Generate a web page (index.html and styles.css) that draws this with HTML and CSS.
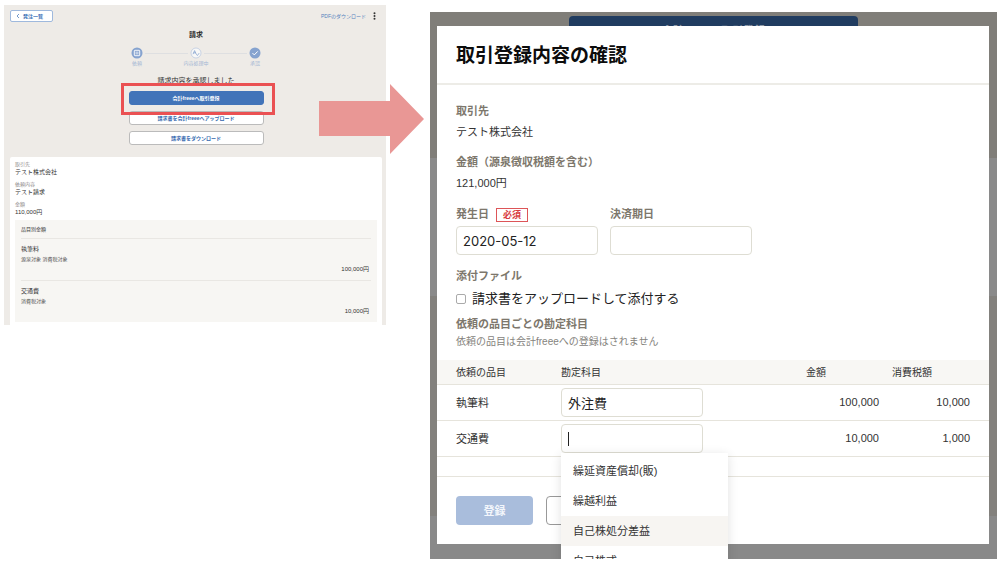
FILE: index.html
```html
<!DOCTYPE html>
<html lang="ja">
<head>
<meta charset="utf-8">
<title>取引登録内容の確認</title>
<link rel="stylesheet" href="styles.css">
</head>
<body>
<main class="stage">
  <section class="invoice">
    <div class="topbar">
      <button class="back" type="button">
        <svg class="chevron" viewBox="0 0 4 6"><path d="M3 1 1 3l2 2" fill="none" stroke="currentColor" stroke-width=".7"/></svg>
        <span>発注一覧</span>
      </button>
      <div class="tools">
        <a class="pdf" href="#">PDFのダウンロード</a>
        <svg class="kebab" viewBox="0 0 3 8"><g fill="#333"><circle cx="1.5" cy="1.2" r="1"/><circle cx="1.5" cy="4" r="1"/><circle cx="1.5" cy="6.8" r="1"/></g></svg>
      </div>
    </div>
    <h1 class="invoice-title">請求</h1>
    <ol class="steps">
      <li class="step">
        <svg class="step-icon" viewBox="0 0 12 12"><circle cx="6" cy="6" r="5.5" fill="#86a3cf"/><rect x="3.3" y="3.3" width="5.4" height="5.4" rx=".7" fill="none" stroke="#fff" stroke-width=".9"/><path d="M4.5 5.2h3M4.5 6.8h3" stroke="#fff" stroke-width=".7"/></svg>
        <span>依頼</span>
      </li>
      <li class="line"></li>
      <li class="step">
        <svg class="step-icon" viewBox="0 0 12 12"><circle cx="6" cy="6" r="5" fill="#f8f8f7" stroke="#b4c4de" stroke-width=".7"/><path d="M3 7.2 4.6 3.6 6.1 7M3.6 5.8h1.9M6.2 7.2l1.2 1.3 1.8-2.4" fill="none" stroke="#86a3cf" stroke-width=".8"/></svg>
        <span>内容処理中</span>
      </li>
      <li class="line"></li>
      <li class="step">
        <svg class="step-icon" viewBox="0 0 12 12"><circle cx="6" cy="6" r="5.5" fill="#86a3cf"/><path d="m3.5 6.1 1.8 1.8 3.4-3.5" fill="none" stroke="#fff" stroke-width="1"/></svg>
        <span>承認</span>
      </li>
    </ol>
    <p class="message">請求内容を承認しました</p>
    <div class="actions">
      <button class="action primary" type="button">会計freeeへ取引登録</button>
      <button class="action" type="button">請求書を会計freeeへアップロード</button>
      <button class="action" type="button">請求書をダウンロード</button>
      <span class="highlight"></span>
    </div>
    <div class="card">
      <dl class="facts">
        <dt>取引先</dt><dd>テスト株式会社</dd>
        <dt>依頼内容</dt><dd>テスト請求</dd>
        <dt>金額</dt><dd>110,000円</dd>
      </dl>
      <div class="breakdown">
        <h2>品目別金額</h2>
        <div class="item"><h3>執筆料</h3><p>源泉対象 消費税対象</p><strong>100,000円</strong></div>
        <div class="item"><h3>交通費</h3><p>消費税対象</p><strong>10,000円</strong></div>
      </div>
    </div>
  </section>

  <svg class="arrow" viewBox="0 0 105 70"><path d="M0 17h71V0l34 35-34 35V52H0z" fill="#e99795"/></svg>

  <section class="backdrop">
    <button class="behind" type="button">会計freeeへ取引登録</button>
    <form class="modal">
      <h2 class="modal-title">取引登録内容の確認</h2>
      <div class="modal-body">
        <h3 class="label">取引先</h3>
        <p class="value">テスト株式会社</p>
        <h3 class="label">金額（源泉徴収税額を含む）</h3>
        <p class="value">121,000円</p>
        <div class="dates">
          <div class="field">
            <label class="label" for="issued">発生日 <span class="required">必須</span></label>
            <input class="box" id="issued" type="text" value="2020-05-12">
          </div>
          <div class="field">
            <label class="label" for="due">決済期日</label>
            <input class="box" id="due" type="text">
          </div>
        </div>
        <h3 class="label">添付ファイル</h3>
        <div class="attach">
          <input class="tick" id="attach" type="checkbox">
          <label for="attach">請求書をアップロードして添付する</label>
        </div>
        <h3 class="label">依頼の品目ごとの勘定科目</h3>
        <p class="note">依頼の品目は会計freeeへの登録はされません</p>
      </div>
      <table class="accounts">
        <thead>
          <tr><th class="c-item">依頼の品目</th><th>勘定科目</th><th class="c-amount">金額</th><th class="c-tax">消費税額</th></tr>
        </thead>
        <tbody>
          <tr>
            <td class="c-item">執筆料</td>
            <td><input class="box" type="text" value="外注費" aria-label="執筆料の勘定科目"></td>
            <td class="c-amount">100,000</td><td class="c-tax">10,000</td>
          </tr>
          <tr>
            <td class="c-item">交通費</td>
            <td>
              <div class="combo">
                <input class="box" type="text" aria-label="交通費の勘定科目">
                <span class="caret"></span>
                <ul class="menu">
                  <li>繰延資産償却(販)</li>
                  <li>繰越利益</li>
                  <li class="active">自己株処分差益</li>
                  <li>自己株式</li>
                </ul>
              </div>
            </td>
            <td class="c-amount">10,000</td><td class="c-tax">1,000</td>
          </tr>
        </tbody>
      </table>
      <div class="modal-foot">
        <button class="submit" type="button">登録</button>
        <button class="cancel" type="button" aria-label="キャンセル"></button>
      </div>
    </form>
  </section>
</main>
</body>
</html>
```
FILE: styles.css
```css
* { box-sizing: border-box; margin: 0; padding: 0; }
body {
  background: #fff;
  color: #333;
  font-family: "Liberation Sans", "Noto Sans CJK JP", sans-serif;
}
button, input { font: inherit; color: inherit; }
ol, ul { list-style: none; }

.stage {
  position: relative;
  display: grid;
  grid-template-columns: 382fr 567fr;
  column-gap: 44px;
  align-items: start;
  padding: 5px 3px 11px 4px;
}

/* invoice page */
.invoice { background: #eeebe7; padding: 5px 4px 0 6px; }
.topbar { display: flex; justify-content: space-between; align-items: center; padding-right: 6px; }
.back {
  display: flex; align-items: center; gap: 3px;
  width: 43px; height: 12px; padding-left: 5px;
  background: #fff; border: 1px solid #9fb9dd; border-radius: 2px;
  color: #3a6fb5; font-size: 5px; font-weight: bold; line-height: 8px;
}
.chevron { width: 4px; height: 6px; }
.tools { display: flex; align-items: center; gap: 7px; }
.pdf { color: #5482bd; font-size: 5px; line-height: 8px; text-decoration: none; }
.kebab { width: 3px; height: 8px; }
.invoice-title { margin-top: 8px; text-align: center; font-size: 7px; line-height: 10px; color: #222; }
.steps { display: flex; justify-content: center; margin-top: 7px; }
.step {
  display: flex; flex-direction: column; align-items: center;
  width: 28px; color: #a5b7d4; font-size: 5px; line-height: 8px; white-space: nowrap;
}
.step-icon { width: 12px; height: 12px; }
.line { width: 43px; height: 1px; margin: 6px -6px 0; background: #dedfe1; }
.message { margin-top: 8px; text-align: center; font-size: 7px; line-height: 12px; }
.actions {
  position: relative;
  display: flex; flex-direction: column; gap: 6px;
  width: 135px; margin: 4px auto 0;
}
.action {
  height: 14px; background: #fff; border: 1px solid #bbb; border-radius: 3px;
  color: #3468ae; font-size: 5px; font-weight: bold; line-height: 8px;
}
.primary { background: #4274b9; border-color: #4274b9; color: #fff; }
.highlight { position: absolute; inset: -8px -11px 30px -8px; border: 3px solid #ea5153; }
.card { margin-top: 12px; padding: 3px 5px; background: #fff; border-radius: 2px 2px 0 0; }
.facts dt { color: #8c8989; font-size: 5px; line-height: 8px; }
.facts dd { margin-bottom: 3px; font-size: 6px; line-height: 9px; }
.breakdown { padding: 4px 6px 0; background: #f7f6f3; }
.breakdown h2 { padding-bottom: 4px; font-size: 5px; font-weight: normal; line-height: 10px; }
.item { border-top: 1px solid #e9e7e3; padding: 5px 2px 6px 0; line-height: 10px; }
.item h3 { font-size: 6px; font-weight: normal; }
.item p { font-size: 5px; color: #555; }
.item strong { display: block; text-align: right; font-size: 6px; font-weight: normal; }

.arrow { position: absolute; left: 319px; top: 84px; width: 105px; height: 70px; }

/* dialog over the dimmed page */
.backdrop {
  position: relative; overflow: hidden;
  margin-top: 7px; padding: 14px 8px 15px 7px;
  background: linear-gradient(#807e79 146px, #8a8a8a 146px 284px, #83817d 284px 504px, #898989 504px);
}
.behind {
  position: absolute; top: 4px; left: 139px; right: 139px; height: 28px;
  background: #203c60; border: 0; border-radius: 4px; color: #8d99a8; font-size: 11px; font-weight: bold;
}
.modal { position: relative; background: #fff; }
.modal-title {
  padding: 15px 19px 13px; border-bottom: 2px solid #edece7;
  color: #0c0c0c; font-size: 19px; line-height: 29px;
}
.modal-body { padding: 16px 19px 11px; }
.label { color: #7d776c; font-size: 11px; font-weight: bold; line-height: 21px; }
.value { margin-bottom: 9px; font-size: 11px; line-height: 21px; }
.dates { display: flex; gap: 12px; margin-bottom: 11px; }
.field { display: flex; flex-direction: column; }
.field .label { display: flex; align-items: center; gap: 7px; height: 23px; }
.required { padding: 0 6px; border: 1px solid #dd5558; color: #d83c40; font-size: 9px; line-height: 12px; }
.box {
  display: block; width: 142px; height: 29px; padding: 0 6px;
  background: #fff; border: 1px solid #deddd3; border-radius: 4px;
  color: #222; font-family: Inter, "Noto Sans CJK JP", sans-serif; font-size: 13px;
}
.attach { display: flex; align-items: center; gap: 6px; margin-bottom: 4px; color: #222; font-size: 13px; line-height: 23px; }
.tick { appearance: none; width: 10px; height: 10px; border: 1px solid #aaa; border-radius: 2px; background: #fff; }
.note { color: #85837d; font-size: 10px; line-height: 14px; }

.accounts { width: 100%; table-layout: fixed; border-collapse: collapse; }
.accounts th { height: 24px; background: #f8f7f4; font-size: 10px; font-weight: normal; text-align: left; }
.accounts tr { border-bottom: 1px solid #e6e4dc; }
.accounts td { height: 36px; font-size: 11px; }
.accounts .c-item { width: 124px; padding-left: 19px; }
.accounts .c-amount { width: 86px; padding-right: 13px; }
.accounts .c-tax { width: 97px; padding-right: 19px; }
td.c-amount, td.c-tax { text-align: right; }
.combo { position: relative; }
.caret { position: absolute; left: 7px; top: 8px; width: 1px; height: 14px; background: #222; }
.menu {
  position: absolute; left: 0; top: 29px; z-index: 1; width: 167px; padding: 3px 0;
  background: #fff; box-shadow: 0 2px 10px rgba(0, 0, 0, .12);
}
.menu li { padding: 0 12px; font-size: 11px; line-height: 30px; }
.menu .active { background: #f7f5f2; }
.modal-foot {
  display: flex; gap: 13px; margin-top: 19px; padding: 19px;
  border-top: 1px solid #e6e4dc;
}
.submit, .cancel { width: 77px; height: 29px; border-radius: 4px; font-size: 11px; font-weight: bold; }
.submit { background: #a9bddc; border: 0; color: #f3f6fb; }
.cancel { background: #fff; border: 1px solid #999; }
```
